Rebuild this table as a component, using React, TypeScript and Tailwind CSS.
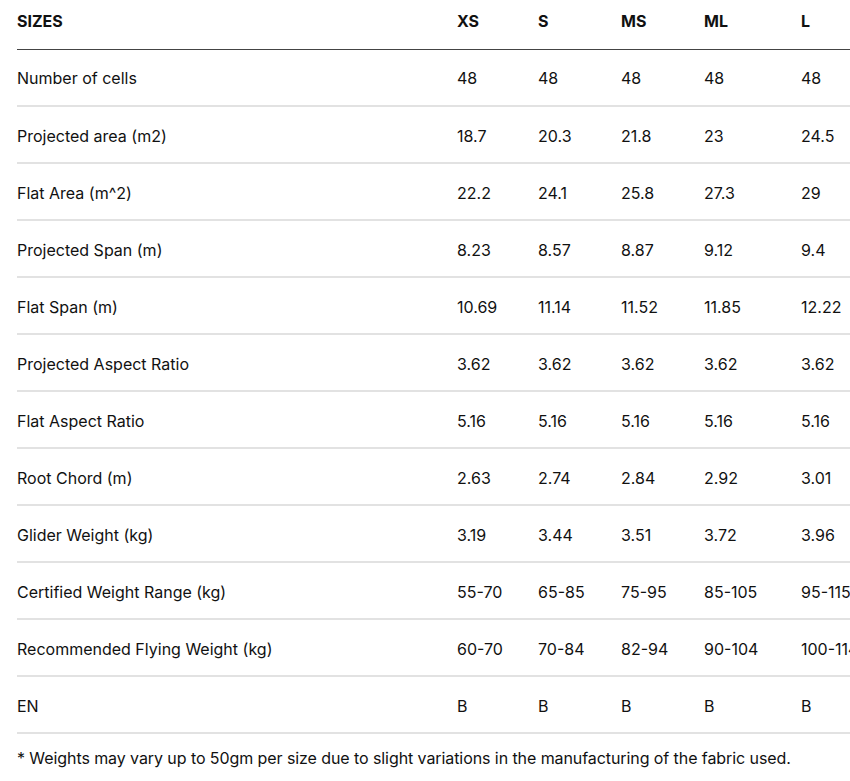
const sizes = ["XS", "S", "MS", "ML", "L"];

const rows: { label: string; values: string[] }[] = [
  { label: "Number of cells", values: ["48", "48", "48", "48", "48"] },
  { label: "Projected area (m2)", values: ["18.7", "20.3", "21.8", "23", "24.5"] },
  { label: "Flat Area (m^2)", values: ["22.2", "24.1", "25.8", "27.3", "29"] },
  { label: "Projected Span (m)", values: ["8.23", "8.57", "8.87", "9.12", "9.4"] },
  { label: "Flat Span (m)", values: ["10.69", "11.14", "11.52", "11.85", "12.22"] },
  { label: "Projected Aspect Ratio", values: ["3.62", "3.62", "3.62", "3.62", "3.62"] },
  { label: "Flat Aspect Ratio", values: ["5.16", "5.16", "5.16", "5.16", "5.16"] },
  { label: "Root Chord (m)", values: ["2.63", "2.74", "2.84", "2.92", "3.01"] },
  { label: "Glider Weight (kg)", values: ["3.19", "3.44", "3.51", "3.72", "3.96"] },
  { label: "Certified Weight Range (kg)", values: ["55-70", "65-85", "75-95", "85-105", "95-115"] },
  { label: "Recommended Flying Weight (kg)", values: ["60-70", "70-84", "82-94", "90-104", "100-114"] },
  { label: "EN", values: ["B", "B", "B", "B", "B"] },
];

const colWidths = ["w-[440px]", "w-[81px]", "w-[83px]", "w-[83px]", "w-[97px]", "w-[90px]"];

export default function App() {
  return (
    <div className="min-h-[781px] overflow-hidden bg-white pl-[17px] font-['Inter',_'Liberation_Sans',_sans-serif] text-[16px] text-[#111]">
      <table className="w-[874px] table-fixed border-collapse">
        <colgroup>
          {colWidths.map((w, i) => (
            <col key={i} className={w} />
          ))}
        </colgroup>
        <thead>
          <tr className="h-[49px] border-b border-[#444]">
            <th className="pb-[7px] text-left align-middle font-bold">SIZES</th>
            {sizes.map((s) => (
              <th key={s} className="pb-[7px] text-left align-middle font-bold">
                {s}
              </th>
            ))}
          </tr>
        </thead>
        <tbody>
          {rows.map((row) => (
            <tr key={row.label} className="h-[57px] border-b-2 border-[#e2e2e2]">
              <td className="pt-[2px] align-middle">{row.label}</td>
              {row.values.map((v, i) => (
                <td key={i} className="whitespace-nowrap pt-[2px] align-middle">
                  {v}
                </td>
              ))}
            </tr>
          ))}
        </tbody>
      </table>
      <p className="mt-[12px] whitespace-nowrap tracking-[-0.08px]">
        * Weights may vary up to 50gm per size due to slight variations in the manufacturing of the fabric used.
      </p>
    </div>
  );
}
